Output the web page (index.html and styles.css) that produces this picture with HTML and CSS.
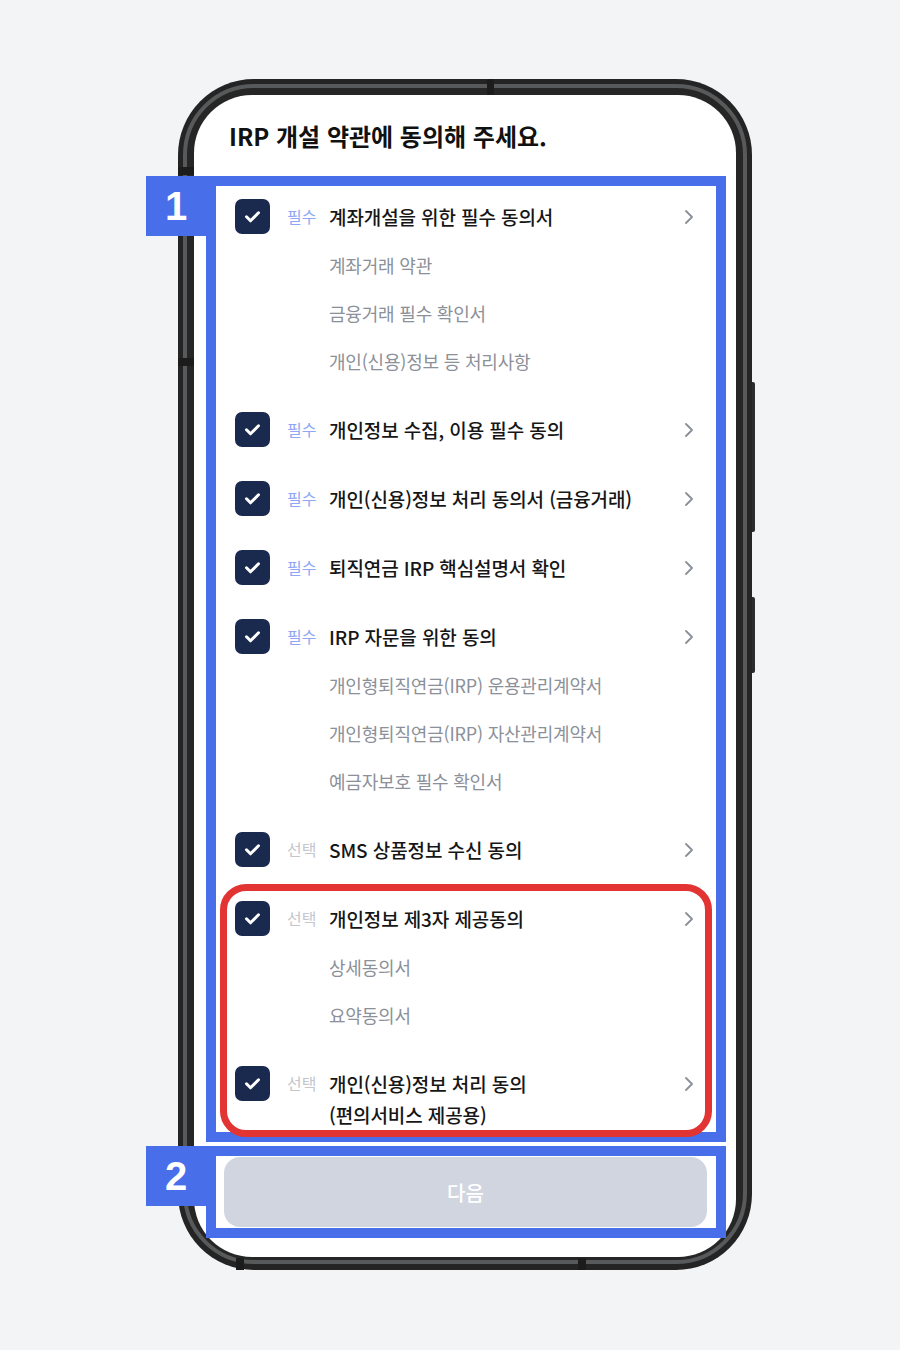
FILE: index.html
```html
<!DOCTYPE html>
<html lang="ko">
<head>
<meta charset="utf-8">
<title>IRP 개설 약관 동의</title>
<link rel="stylesheet" href="styles.css">
</head>
<body>
<div class="stage">
  <div class="phone">
    <span class="hw hw-vol-up"></span>
    <span class="hw hw-vol-down"></span>
    <span class="hw hw-line hw-line-top"></span>
    <span class="hw hw-line hw-line-left1"></span>
    <span class="hw hw-line hw-line-left2"></span>
    <span class="hw hw-line hw-line-bl"></span>
    <span class="hw hw-line hw-line-br"></span>
    <div class="band">
      <div class="screen">
        <h1 class="title">IRP 개설 약관에 동의해 주세요.</h1>

        <section class="annot annot-list">
          <span class="badge">1</span>
          <div class="terms">
            <div class="group">
              <div class="row">
                <svg class="check" viewBox="0 0 35 35"><rect width="35" height="35" rx="7" fill="#1a2a4e"/><path d="M11.5 17.8l4 4 8-8" fill="none" stroke="#fff" stroke-width="3" stroke-linecap="round" stroke-linejoin="round"/></svg>
                <span class="tag tag-req">필수</span>
                <span class="name">계좌개설을 위한 필수 동의서</span>
                <svg class="chev" viewBox="0 0 8 14"><path d="M1 1l6 6-6 6" fill="none" stroke="#8a8f99" stroke-width="1.8" stroke-linecap="round" stroke-linejoin="round"/></svg>
              </div>
              <div class="sub">계좌거래 약관</div>
              <div class="sub">금융거래 필수 확인서</div>
              <div class="sub">개인(신용)정보 등 처리사항</div>
            </div>

            <div class="group">
              <div class="row">
                <svg class="check" viewBox="0 0 35 35"><rect width="35" height="35" rx="7" fill="#1a2a4e"/><path d="M11.5 17.8l4 4 8-8" fill="none" stroke="#fff" stroke-width="3" stroke-linecap="round" stroke-linejoin="round"/></svg>
                <span class="tag tag-req">필수</span>
                <span class="name">개인정보 수집, 이용 필수 동의</span>
                <svg class="chev" viewBox="0 0 8 14"><path d="M1 1l6 6-6 6" fill="none" stroke="#8a8f99" stroke-width="1.8" stroke-linecap="round" stroke-linejoin="round"/></svg>
              </div>
            </div>

            <div class="group">
              <div class="row">
                <svg class="check" viewBox="0 0 35 35"><rect width="35" height="35" rx="7" fill="#1a2a4e"/><path d="M11.5 17.8l4 4 8-8" fill="none" stroke="#fff" stroke-width="3" stroke-linecap="round" stroke-linejoin="round"/></svg>
                <span class="tag tag-req">필수</span>
                <span class="name">개인(신용)정보 처리 동의서 (금융거래)</span>
                <svg class="chev" viewBox="0 0 8 14"><path d="M1 1l6 6-6 6" fill="none" stroke="#8a8f99" stroke-width="1.8" stroke-linecap="round" stroke-linejoin="round"/></svg>
              </div>
            </div>

            <div class="group">
              <div class="row">
                <svg class="check" viewBox="0 0 35 35"><rect width="35" height="35" rx="7" fill="#1a2a4e"/><path d="M11.5 17.8l4 4 8-8" fill="none" stroke="#fff" stroke-width="3" stroke-linecap="round" stroke-linejoin="round"/></svg>
                <span class="tag tag-req">필수</span>
                <span class="name">퇴직연금 IRP 핵심설명서 확인</span>
                <svg class="chev" viewBox="0 0 8 14"><path d="M1 1l6 6-6 6" fill="none" stroke="#8a8f99" stroke-width="1.8" stroke-linecap="round" stroke-linejoin="round"/></svg>
              </div>
            </div>

            <div class="group">
              <div class="row">
                <svg class="check" viewBox="0 0 35 35"><rect width="35" height="35" rx="7" fill="#1a2a4e"/><path d="M11.5 17.8l4 4 8-8" fill="none" stroke="#fff" stroke-width="3" stroke-linecap="round" stroke-linejoin="round"/></svg>
                <span class="tag tag-req">필수</span>
                <span class="name">IRP 자문을 위한 동의</span>
                <svg class="chev" viewBox="0 0 8 14"><path d="M1 1l6 6-6 6" fill="none" stroke="#8a8f99" stroke-width="1.8" stroke-linecap="round" stroke-linejoin="round"/></svg>
              </div>
              <div class="sub">개인형퇴직연금(IRP) 운용관리계약서</div>
              <div class="sub">개인형퇴직연금(IRP) 자산관리계약서</div>
              <div class="sub">예금자보호 필수 확인서</div>
            </div>

            <div class="group">
              <div class="row">
                <svg class="check" viewBox="0 0 35 35"><rect width="35" height="35" rx="7" fill="#1a2a4e"/><path d="M11.5 17.8l4 4 8-8" fill="none" stroke="#fff" stroke-width="3" stroke-linecap="round" stroke-linejoin="round"/></svg>
                <span class="tag tag-opt">선택</span>
                <span class="name">SMS 상품정보 수신 동의</span>
                <svg class="chev" viewBox="0 0 8 14"><path d="M1 1l6 6-6 6" fill="none" stroke="#8a8f99" stroke-width="1.8" stroke-linecap="round" stroke-linejoin="round"/></svg>
              </div>
            </div>

            <div class="highlight">
              <div class="group">
                <div class="row">
                  <svg class="check" viewBox="0 0 35 35"><rect width="35" height="35" rx="7" fill="#1a2a4e"/><path d="M11.5 17.8l4 4 8-8" fill="none" stroke="#fff" stroke-width="3" stroke-linecap="round" stroke-linejoin="round"/></svg>
                  <span class="tag tag-opt">선택</span>
                  <span class="name">개인정보 제3자 제공동의</span>
                  <svg class="chev" viewBox="0 0 8 14"><path d="M1 1l6 6-6 6" fill="none" stroke="#8a8f99" stroke-width="1.8" stroke-linecap="round" stroke-linejoin="round"/></svg>
                </div>
                <div class="sub">상세동의서</div>
                <div class="sub">요약동의서</div>
              </div>

              <div class="group">
                <div class="row">
                  <svg class="check" viewBox="0 0 35 35"><rect width="35" height="35" rx="7" fill="#1a2a4e"/><path d="M11.5 17.8l4 4 8-8" fill="none" stroke="#fff" stroke-width="3" stroke-linecap="round" stroke-linejoin="round"/></svg>
                  <span class="tag tag-opt">선택</span>
                  <span class="name">개인(신용)정보 처리 동의<br>(편의서비스 제공용)</span>
                  <svg class="chev" viewBox="0 0 8 14"><path d="M1 1l6 6-6 6" fill="none" stroke="#8a8f99" stroke-width="1.8" stroke-linecap="round" stroke-linejoin="round"/></svg>
                </div>
              </div>
            </div>
          </div>
        </section>

        <section class="annot annot-cta">
          <span class="badge">2</span>
          <button class="next" type="button">다음</button>
        </section>
      </div>
    </div>
  </div>
</div>
</body>
</html>
```

FILE: styles.css
```css
* { box-sizing: border-box; }

html, body {
  margin: 0;
  padding: 0;
}

body {
  width: 900px;
  height: 1350px;
  background: #f3f4f6;
  font-family: "Noto Sans CJK KR", "Noto Sans", sans-serif;
  color: #161616;
  overflow: hidden;
}

.stage {
  padding: 79px 0 0 178px;
}

.phone {
  position: relative;
  width: 574px;
  height: 1191px;
  padding: 5px 5px 6px 5px;
  background: #242424;
  border-radius: 76px;
}

.band {
  height: 100%;
  border: 4px solid #58595a;
  border-radius: 71px;
  background: #262626;
  padding: 7px 7px 3px 7px;
}

.screen {
  height: 100%;
  background: #fff;
  border-radius: 58px;
  display: flex;
  flex-direction: column;
  padding: 26px 0 19px;
}

/* hardware details */
.hw { position: absolute; display: block; background: #2c2c2c; }
.hw-vol-up { right: -3px; top: 303px; width: 3px; height: 150px; border-radius: 0 2px 2px 0; }
.hw-vol-down { right: -3px; top: 518px; width: 3px; height: 76px; border-radius: 0 2px 2px 0; }
.hw-line { background: #1c1c1c; }
.hw-line-top { top: 0; left: 309px; width: 7px; height: 16px; }
.hw-line-left1 { left: 0; top: 88px; width: 16px; height: 8px; }
.hw-line-left2 { left: 0; top: 279px; width: 16px; height: 8px; }
.hw-line-bl { bottom: 0; left: 58px; width: 8px; height: 12px; }
.hw-line-br { bottom: 0; left: 400px; width: 8px; height: 12px; }

.title {
  margin: 0 35px 25px;
  font-size: 24px;
  line-height: 30px;
  font-weight: 700;
  color: #111;
  letter-spacing: 0;
}

/* annotation boxes */
.annot {
  position: relative;
  border: 10px solid #486ee9;
  margin: 0 10px 0 12px;
}

.badge {
  position: absolute;
  left: -70px;
  top: -10px;
  width: 60px;
  height: 60px;
  background: #486ee9;
  color: #fff;
  font-family: "Liberation Sans", Arial, sans-serif;
  font-weight: 700;
  font-size: 40px;
  line-height: 60px;
  text-align: center;
}

.annot-list {
  flex: 1;
  min-height: 0;
}

.annot-cta {
  margin-top: 4px;
  height: 92px;
  padding: 1px 9px 1px 8px;
}

/* list */
.terms {
  display: flex;
  flex-direction: column;
  gap: 21px;
  padding-top: 7px;
}

.highlight {
  position: relative;
  display: flex;
  flex-direction: column;
  gap: 21px;
}

.highlight::after {
  content: "";
  position: absolute;
  top: -11px;
  left: 4px;
  right: 4px;
  bottom: 2px;
  border: 7px solid #e33434;
  border-radius: 26px;
  pointer-events: none;
}

.row {
  display: flex;
  align-items: flex-start;
  padding: 8px 23px 9px 19px;
  line-height: 31px;
}

.check {
  flex: none;
  width: 35px;
  height: 35px;
  margin: -2px 17px -2px 0;
}

.tag {
  flex: none;
  width: 42px;
  font-size: 16px;
}

.tag-req { color: #8ea6f5; }
.tag-opt { color: #c3c6cd; }

.name {
  flex: 1;
  font-size: 19px;
  font-weight: 500;
  color: #161616;
  letter-spacing: -0.1px;
}

.chev {
  flex: none;
  width: 8px;
  height: 14px;
  margin-top: 8.5px;
  margin-left: 8px;
}

.sub {
  height: 48px;
  line-height: 48px;
  padding-left: 113px;
  font-size: 18px;
  color: #8b9099;
  letter-spacing: -0.2px;
}

.next {
  display: block;
  width: 100%;
  height: 100%;
  border: 0;
  border-radius: 16px;
  background: #d1d5df;
  color: #fff;
  font-family: "Noto Sans CJK KR", "Noto Sans", sans-serif;
  font-size: 20px;
  font-weight: 500;
}
```
